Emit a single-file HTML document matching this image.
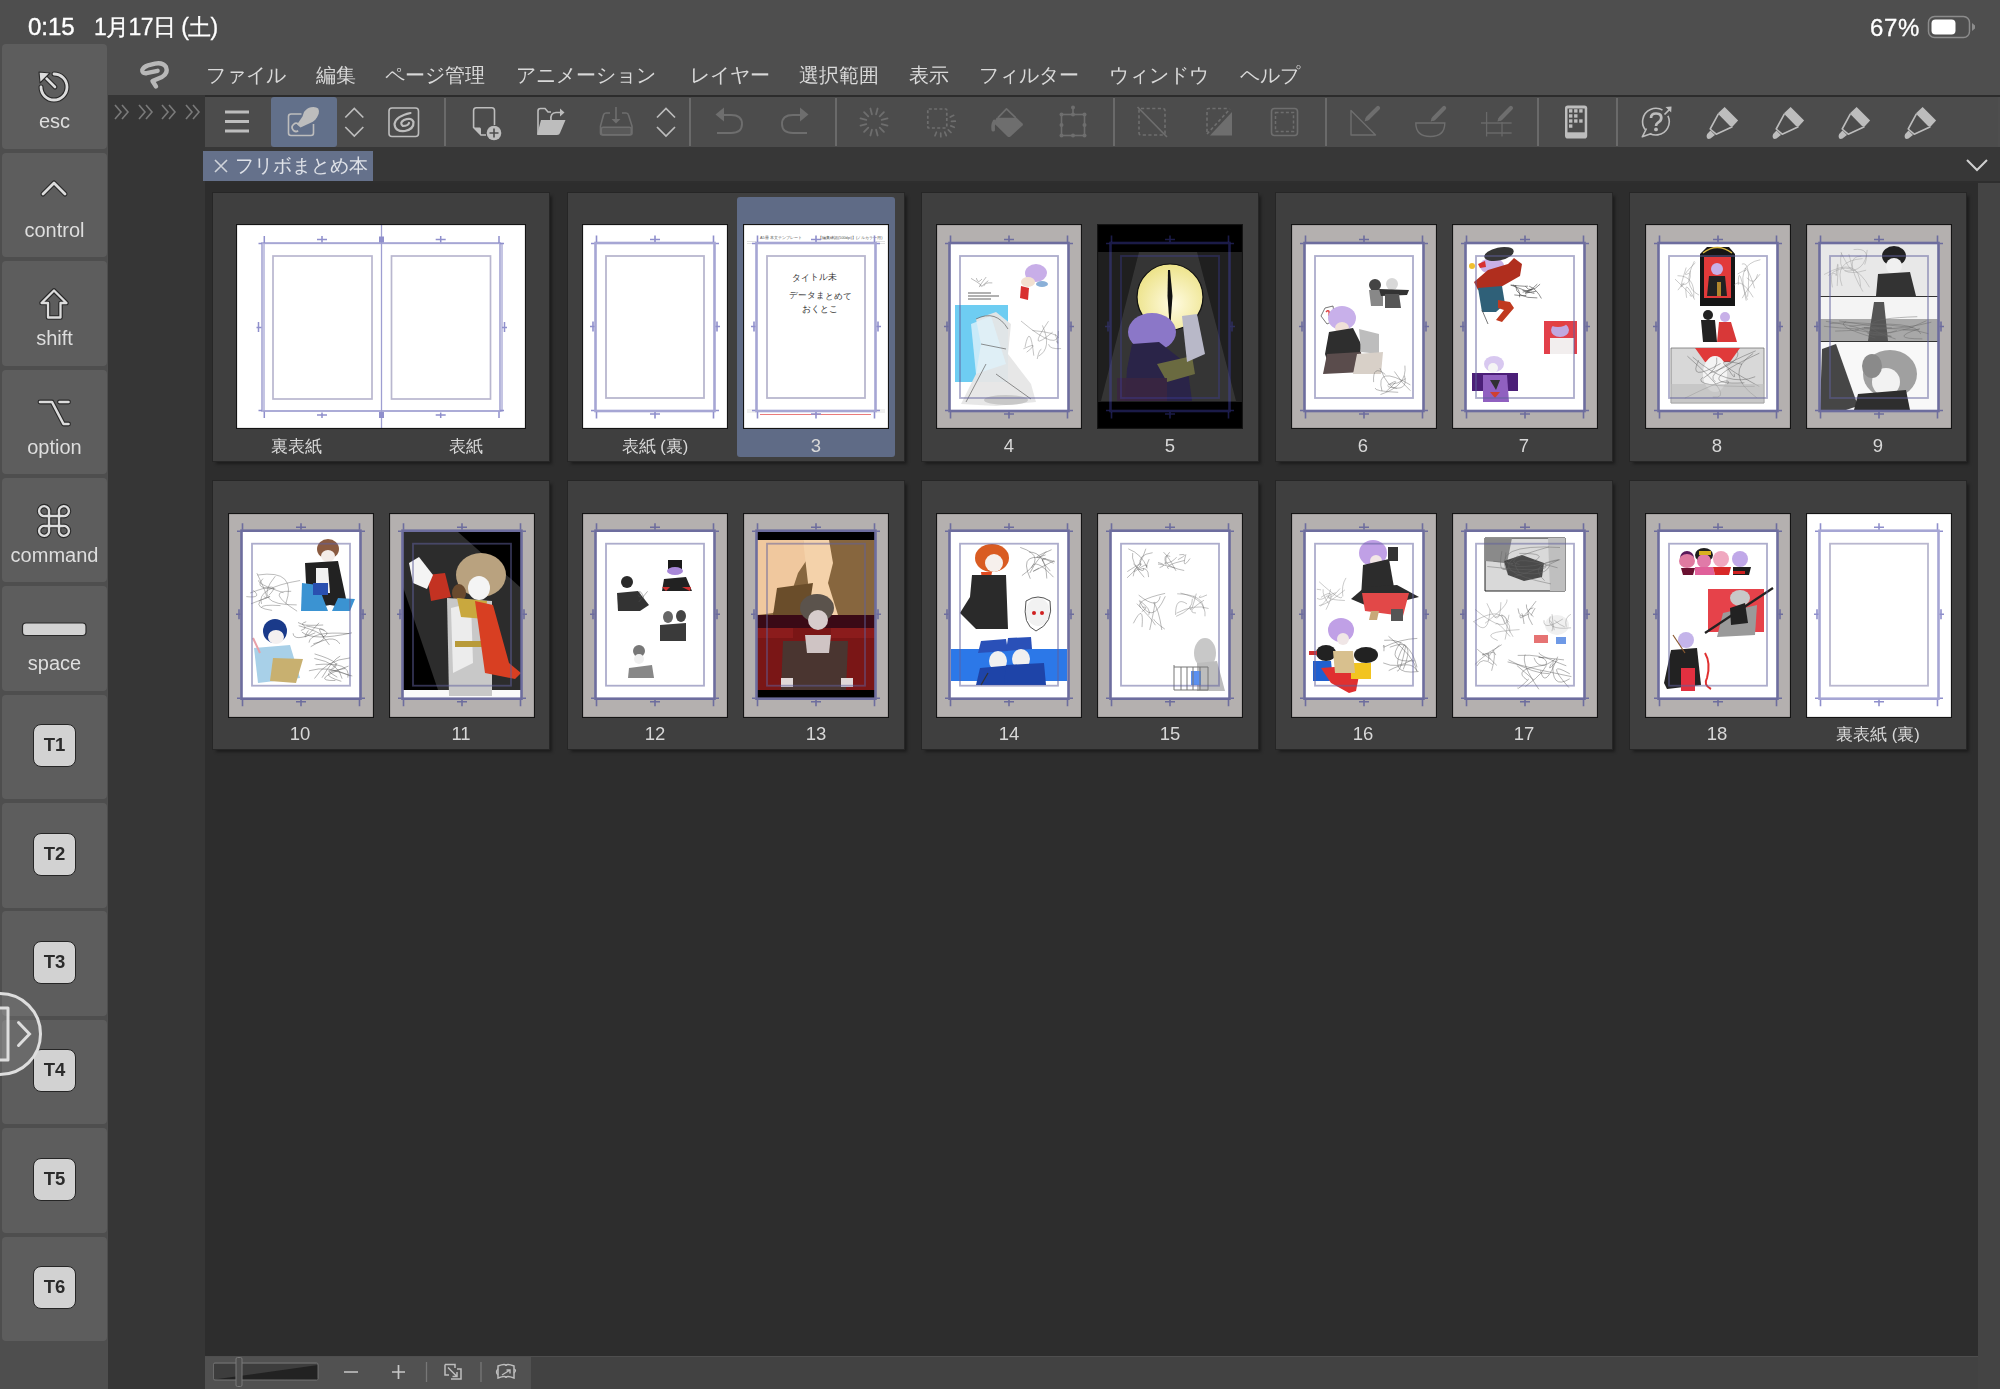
<!DOCTYPE html><html><head><meta charset="utf-8"><style>
*{margin:0;padding:0;box-sizing:border-box}
html,body{width:2000px;height:1389px;overflow:hidden;background:#4e4e4e;font-family:"Liberation Sans",sans-serif}
.a{position:absolute}
.t{will-change:transform}
.key{position:absolute;left:2px;width:105px;height:104.6px;background:#5d5d5d;border-radius:4px}
.kl{position:absolute;left:0;width:105px;text-align:center;color:#dedede;font-size:20px;line-height:20px}
.tb{position:absolute;left:31px;width:43px;height:43px;background:#d2d2d2;border:1.5px solid #262626;border-radius:8px;color:#2b2b2b;font-weight:bold;font-size:18.5px;line-height:40px;text-align:center}
.menu{position:absolute;top:64px;color:#d9d9d9;font-size:20px;line-height:22px;white-space:nowrap}
.sep{position:absolute;top:98px;width:2px;height:48px;background:#6a6a6a}
.card{position:absolute;width:336px;height:268px;background:#3f3f3f;box-shadow:0 0 0 1px #262626,3px 3px 3px rgba(0,0,0,0.4)}
.lbl{position:absolute;color:#d8d8d8;font-size:18.5px;line-height:20px;text-align:center;white-space:nowrap}
.pg{position:absolute;width:146px;height:205px}

</style></head><body>
<div class="a" style="left:108px;top:95px;width:97px;height:1294px;background:#363636"></div>
<div class="a" style="left:205px;top:183px;width:1773px;height:1173px;background:#2d2d2d"></div>
<div class="a" style="left:1978px;top:183px;width:22px;height:1206px;background:#444444"></div>
<div class="a" style="left:205px;top:1357px;width:1773px;height:32px;background:#424242"></div>
<div class="a" style="left:205px;top:1357px;width:326px;height:32px;background:#515151"></div>
<div class="a" style="left:205px;top:147px;width:1795px;height:36px;background:#373737"></div>
<div class="a" style="left:205px;top:181px;width:1795px;height:2px;background:#2e2e2e"></div>
<div class="a" style="left:205px;top:95px;width:1795px;height:2px;background:#2c2c2c"></div>
<div class="a" style="left:205px;top:97px;width:1793px;height:50px;background:#4c4c4c"></div>
<div class="a" style="left:271px;top:97px;width:66px;height:50px;background:#62708a;border-radius:3px"></div>
<div class="sep" style="left:444px"></div>
<div class="sep" style="left:689px"></div>
<div class="sep" style="left:835px"></div>
<div class="sep" style="left:1113px"></div>
<div class="sep" style="left:1325px"></div>
<div class="sep" style="left:1537px"></div>
<div class="sep" style="left:1616px"></div>
<div class="a" style="left:203px;top:151px;width:170px;height:30px;background:#65718b"></div>
<div class="a t" style="left:235px;top:154px;color:#dfe2e8;font-size:19px;line-height:24px;white-space:nowrap">フリボまとめ本</div>
<svg class="a" style="left:213px;top:158px" width="16" height="16"><path d="M2 2L14 14M14 2L2 14" stroke="#cfd3da" stroke-width="1.6"/></svg>
<svg class="a" style="left:1964px;top:156px" width="26" height="18"><path d="M3 4L13 14L23 4" stroke="#d0d0d0" stroke-width="2" fill="none"/></svg>
<div class="a t" style="left:28px;top:13px;color:#fff;font-size:24px;line-height:28px;white-space:nowrap;-webkit-text-stroke:0.4px #fff">0:15</div>
<div class="a t" style="left:94px;top:13px;color:#fff;font-size:23px;line-height:28px;white-space:nowrap;letter-spacing:-0.6px;-webkit-text-stroke:0.3px #fff">1月17日 (土)</div>
<div class="a t" style="left:1870px;top:14px;color:#fff;font-size:24px;line-height:28px;white-space:nowrap;letter-spacing:0.7px;-webkit-text-stroke:0.3px #fff">67%</div>
<svg class="a" style="left:1926px;top:14px" width="52" height="26"><rect x="2.5" y="2.5" width="41" height="21" rx="6" fill="none" stroke="#8c8c8c" stroke-width="1.5"/><rect x="5.5" y="5.5" width="24" height="15" rx="4" fill="#fff"/><path d="M46 9L49 11.5V14.5L46 17Z" fill="#8c8c8c"/></svg>
<div class="menu t" style="left:206px">ファイル</div>
<div class="menu t" style="left:316px">編集</div>
<div class="menu t" style="left:385px">ページ管理</div>
<div class="menu t" style="left:516px">アニメーション</div>
<div class="menu t" style="left:690px">レイヤー</div>
<div class="menu t" style="left:799px">選択範囲</div>
<div class="menu t" style="left:909px">表示</div>
<div class="menu t" style="left:979px">フィルター</div>
<div class="menu t" style="left:1109px">ウィンドウ</div>
<div class="menu t" style="left:1240px">ヘルプ</div>
<svg class="a" style="left:138px;top:58px" width="34" height="34" viewBox="0 0 34 34"><path d="M19.6 12.8 L8.5 15.2 Q3.8 15.8 4.3 11.8 Q5.5 8.8 10 7.3 L17 5.6 Q25 4.2 28 9 Q30.5 15 24 19 L14.5 23 L18 28.5" stroke="#b8b8b8" stroke-width="4.4" fill="none" stroke-linecap="round" stroke-linejoin="round"/></svg>
<svg class="a" style="left:113.0px;top:103px" width="20" height="18"><path d="M2 2L8 9L2 16M9 2L15 9L9 16" stroke="#7a7a7a" stroke-width="1.6" fill="none"/></svg>
<svg class="a" style="left:136.5px;top:103px" width="20" height="18"><path d="M2 2L8 9L2 16M9 2L15 9L9 16" stroke="#7a7a7a" stroke-width="1.6" fill="none"/></svg>
<svg class="a" style="left:160.0px;top:103px" width="20" height="18"><path d="M2 2L8 9L2 16M9 2L15 9L9 16" stroke="#7a7a7a" stroke-width="1.6" fill="none"/></svg>
<svg class="a" style="left:183.5px;top:103px" width="20" height="18"><path d="M2 2L8 9L2 16M9 2L15 9L9 16" stroke="#7a7a7a" stroke-width="1.6" fill="none"/></svg>
<div class="key" style="top:44.4px">
<div class="kl t" style="top:67px">esc</div>
</div>
<div class="key" style="top:152.8px">
<div class="kl t" style="top:67px">control</div>
</div>
<div class="key" style="top:261.2px">
<div class="kl t" style="top:67px">shift</div>
</div>
<div class="key" style="top:369.5px">
<div class="kl t" style="top:67px">option</div>
</div>
<div class="key" style="top:477.9px">
<div class="kl t" style="top:67px">command</div>
</div>
<div class="key" style="top:586.3px">
<div class="kl t" style="top:67px">space</div>
</div>
<div class="key" style="top:694.7px">
<div class="tb t" style="top:29.5px">T1</div>
</div>
<div class="key" style="top:803.1px">
<div class="tb t" style="top:29.5px">T2</div>
</div>
<div class="key" style="top:911.4px">
<div class="tb t" style="top:29.5px">T3</div>
</div>
<div class="key" style="top:1019.8px">
<div class="tb t" style="top:29.5px">T4</div>
</div>
<div class="key" style="top:1128.2px">
<div class="tb t" style="top:29.5px">T5</div>
</div>
<div class="key" style="top:1236.6px">
<div class="tb t" style="top:29.5px">T6</div>
</div>
<svg class="a" style="left:0;top:0" width="108" height="700">
<path d="M54 74 A13 13 0 1 1 41 87" stroke="#2a2a2a" stroke-width="5.0" fill="none" stroke-linecap="round" stroke-linejoin="round" /><path d="M54 74 A13 13 0 1 1 41 87" stroke="#dcdcdc" stroke-width="2.8" fill="none" stroke-linecap="round" stroke-linejoin="round" />
<path d="M45 77 L55 87" stroke="#2a2a2a" stroke-width="4.800000000000001" fill="none" stroke-linecap="round" stroke-linejoin="round" /><path d="M45 77 L55 87" stroke="#dcdcdc" stroke-width="2.6" fill="none" stroke-linecap="round" stroke-linejoin="round" />
<path d="M39 72 L50 73 L40 83 Z" fill="#dcdcdc" stroke="#2a2a2a" stroke-width="1.1" stroke-linejoin="round"/>
<path d="M43 194 L54 183 L65 194" stroke="#2a2a2a" stroke-width="5.0" fill="none" stroke-linecap="round" stroke-linejoin="round" /><path d="M43 194 L54 183 L65 194" stroke="#dcdcdc" stroke-width="2.8" fill="none" stroke-linecap="round" stroke-linejoin="round" />
<path d="M54 290.5 L66.5 303 L60.5 303 L60.5 317.5 L48 317.5 L48 303 L41.5 303 Z" fill="none" stroke="#2a2a2a" stroke-width="4.6" stroke-linejoin="round"/>
<path d="M54 290.5 L66.5 303 L60.5 303 L60.5 317.5 L48 317.5 L48 303 L41.5 303 Z" fill="none" stroke="#dcdcdc" stroke-width="2.3" stroke-linejoin="round"/>
<path d="M40 402 L52 402 L63.5 424 L68.5 424 M59.5 402 L68.5 402" stroke="#2a2a2a" stroke-width="4.800000000000001" fill="none" stroke-linecap="round" stroke-linejoin="round" /><path d="M40 402 L52 402 L63.5 424 L68.5 424 M59.5 402 L68.5 402" stroke="#dcdcdc" stroke-width="2.6" fill="none" stroke-linecap="round" stroke-linejoin="round" />
<g transform="translate(54 521)">
<path d="M-5 -5 L5 -5 L5 5 L-5 5 Z M-5 -5 L-5 -9 A5 5 0 1 0 -9 -5 L-5 -5 M5 -5 L5 -9 A5 5 0 1 1 9 -5 L5 -5 M5 5 L9 5 A5 5 0 1 1 5 9 L5 5 M-5 5 L-5 9 A5 5 0 1 1 -9 5 L-5 5" stroke="#2a2a2a" stroke-width="4.6" fill="none" stroke-linecap="round" stroke-linejoin="round" /><path d="M-5 -5 L5 -5 L5 5 L-5 5 Z M-5 -5 L-5 -9 A5 5 0 1 0 -9 -5 L-5 -5 M5 -5 L5 -9 A5 5 0 1 1 9 -5 L5 -5 M5 5 L9 5 A5 5 0 1 1 5 9 L5 5 M-5 5 L-5 9 A5 5 0 1 1 -9 5 L-5 5" stroke="#dcdcdc" stroke-width="2.4" fill="none" stroke-linecap="round" stroke-linejoin="round" />
</g>
<rect x="22.5" y="623" width="63.5" height="12.5" rx="3.5" fill="#d3d3d3" stroke="#2a2a2a" stroke-width="1.2"/>
</svg>
<svg class="a" style="left:0;top:988px" width="48" height="92">
<circle cx="0" cy="46" r="40.5" fill="rgba(160,160,160,0.2)" stroke="#dedede" stroke-width="3"/>
<path d="M-10 20 H8 V72 H-10" fill="rgba(200,200,200,0.22)" stroke="#dedede" stroke-width="3" stroke-linejoin="round"/>
<path d="M18.5 34.5 L29.5 46 L18.5 57.5" fill="none" stroke="#dedede" stroke-width="3" stroke-linecap="round"/>
</svg>
<svg class="a" style="left:0;top:95px" width="2000" height="52" viewBox="0 95 2000 52">
<rect x="225" y="110.5" width="24" height="3" fill="#bdbdbd"/>
<rect x="225" y="120.0" width="24" height="3" fill="#bdbdbd"/>
<rect x="225" y="129.5" width="24" height="3" fill="#bdbdbd"/>
<path d="M301.5 114 H291 Q288.5 114 288.5 116.5 V133 Q288.5 135.5 291 135.5 H311 Q313.5 135.5 313.5 133 V124" stroke="#bdbdbd" stroke-width="1.6" fill="none"/>
<path d="M304 112 Q307 108 311 107.3 Q316 106.5 318.2 108.6 Q319.5 111 318.7 113.7 Q317.5 117 315.3 119.7 Q313 122 310.2 123 L300.5 127.5 L297 124.5 L302.5 116.5 Z" fill="#bdbdbd"/>
<path d="M299 124.5 A4 4 0 1 0 298.2 130.8" stroke="#bdbdbd" stroke-width="1.7" fill="none"/>
<path d="M345.3 117.5 L354.3 108.5 L363.3 117.5 M345.3 127 L354.3 136 L363.3 127" stroke="#bdbdbd" stroke-width="1.7" fill="none"/>
<path d="M657 117.5 L666 108.5 L675 117.5 M657 127 L666 136 L675 127" stroke="#bdbdbd" stroke-width="1.7" fill="none"/>
<rect x="389" y="108" width="29.5" height="28.5" rx="3" stroke="#bdbdbd" stroke-width="1.6" fill="none"/>
<path d="M410.5 113 Q396 116 394.5 124 Q395 132 405 131 Q414 129 413.5 122 Q411.5 117 404 120 Q399 123 403 126 Q408 126 409 123" stroke="#bdbdbd" stroke-width="2.2" fill="none" stroke-linecap="round"/>
<path d="M494.5 125 V110.5 Q494.5 107.8 491.8 107.8 H476.3 Q473.6 107.8 473.6 110.5 V127.5 L481 135 H486" stroke="#bdbdbd" stroke-width="1.6" fill="none"/>
<path d="M473.5 127.5 L480 127.5 Q481 128 481 129 L481 135 Z" fill="#bdbdbd"/>
<circle cx="494" cy="133" r="7.3" fill="#bdbdbd"/><path d="M494 128.5 V137.5 M489.5 133 H498.5" stroke="#4c4c4c" stroke-width="1.6"/>
<path d="M538 134 V111 Q538 108.5 540.5 108.5 H545 L548 112 H551" stroke="#bdbdbd" stroke-width="1.6" fill="none"/>
<path d="M541 120 H565.5 L560 133 Q559.5 135 557 135 H537 Z" fill="#bdbdbd"/>
<path d="M551 120 Q550 113 556 112.5 H561" stroke="#bdbdbd" stroke-width="1.7" fill="none"/><path d="M560 108.5 L564.5 112.5 L560 116.5 Z" fill="#bdbdbd"/>
<path d="M610 113 H606 Q604 113 603.5 115 L600.5 126 V133 Q600.5 135 602.5 135 H630 Q632 135 632 133 V126 L628.5 115 Q628 113 626 113 H622" stroke="#6e6e6e" stroke-width="1.6" fill="none"/>
<rect x="601.3" y="127.3" width="30" height="7.5" rx="2" fill="#595959" stroke="#6e6e6e" stroke-width="1.5"/>
<path d="M616 107 V121" stroke="#6e6e6e" stroke-width="1.6"/><path d="M611.5 119 L616 123.5 L620.5 119 Z" fill="#6e6e6e"/>
<path d="M722 115 H731 Q742 115 742 124 Q742 133 731 133 H717" stroke="#6e6e6e" stroke-width="1.9" fill="none"/><path d="M715.5 114.5 L724 107.5 V121.5 Z" fill="#6e6e6e"/>
<path d="M800 115 H793 Q782 115 782 124 Q782 133 793 133 H807" stroke="#6e6e6e" stroke-width="1.9" fill="none"/><path d="M808.5 114.5 L800 107.5 V121.5 Z" fill="#6e6e6e"/>
<path d="M881.7 124.1L887.5 125.6M879.7 127.7L883.9 131.9M876.1 129.7L877.6 135.5M871.9 129.7L870.4 135.5M868.3 127.7L864.1 131.9M866.3 124.1L860.5 125.6M866.3 119.9L860.5 118.4M868.3 116.3L864.1 112.1M871.9 114.3L870.4 108.5M876.1 114.3L877.6 108.5M879.7 116.3L883.9 112.1M881.7 119.9L887.5 118.4" stroke="#6e6e6e" stroke-width="1.8" stroke-linecap="round"/>
<rect x="927.8" y="109" width="19" height="19" rx="1" stroke="#6e6e6e" stroke-width="1.7" fill="none" stroke-dasharray="3 2.3"/>
<path d="M950.3 117.0L953.7 115.3M951.5 121.4L955.3 121.2M950.8 125.9L954.3 127.3M948.3 129.8L951.0 132.5M944.8 132.1L946.3 135.6M940.7 133.0L940.8 136.8M936.4 132.2L935.0 135.7" stroke="#6e6e6e" stroke-width="1.7" stroke-linecap="round"/>
<path d="M997.8 117.8 L1006.5 108.8 L1015.8 117.8" stroke="#6e6e6e" stroke-width="1.7" fill="none" stroke-linejoin="round"/>
<path d="M996.5 117.8 H1016.5 L1022.5 123.5 Q1023.5 124.5 1022.5 125.5 L1010.5 136.5 Q1009 137.5 1007.5 136.5 L993.8 123 Z" fill="#6e6e6e"/>
<path d="M994.5 121.5 Q992.5 125 993.2 129.8" stroke="#6e6e6e" stroke-width="3.6" fill="none" stroke-linecap="round"/>
<rect x="1061.5" y="114.5" width="23" height="21" stroke="#6e6e6e" stroke-width="1.6" fill="none"/><path d="M1073 114.5 V108" stroke="#6e6e6e" stroke-width="1.6"/>
<circle cx="1061.5" cy="114.5" r="2" fill="#6e6e6e"/>
<circle cx="1073" cy="114.5" r="2" fill="#6e6e6e"/>
<circle cx="1084.5" cy="114.5" r="2" fill="#6e6e6e"/>
<circle cx="1061.5" cy="125" r="2" fill="#6e6e6e"/>
<circle cx="1084.5" cy="125" r="2" fill="#6e6e6e"/>
<circle cx="1061.5" cy="135.5" r="2" fill="#6e6e6e"/>
<circle cx="1073" cy="135.5" r="2" fill="#6e6e6e"/>
<circle cx="1084.5" cy="135.5" r="2" fill="#6e6e6e"/>
<circle cx="1073" cy="107.5" r="2" fill="#6e6e6e"/>
<rect x="1139" y="108.5" width="26" height="26.5" rx="2" stroke="#6e6e6e" stroke-width="1.6" fill="none" stroke-dasharray="3.2 2.4"/><path d="M1137.5 107 L1167 137" stroke="#6e6e6e" stroke-width="1.6"/>
<path d="M1207 132 V110 Q1207 108.5 1208.5 108.5 H1229" stroke="#6e6e6e" stroke-width="1.6" fill="none" stroke-dasharray="3.2 2.4"/><path d="M1207 134 L1230 109" stroke="#6e6e6e" stroke-width="1.6" stroke-dasharray="3.2 2.4"/><path d="M1210 135.5 L1232 112 V135.5 Z" fill="#6e6e6e"/>
<rect x="1271.5" y="108.5" width="26" height="27" rx="3" stroke="#6e6e6e" stroke-width="1.6" fill="none"/><rect x="1275.5" y="112.5" width="18" height="19" stroke="#6e6e6e" stroke-width="1.5" fill="none" stroke-dasharray="3 2.2"/>
<path d="M1351 110.5 V135 H1375.5 Z" stroke="#6e6e6e" stroke-width="1.4" fill="none" stroke-linejoin="round"/><path d="M1367.7 118.3 L1378.0 108.0" stroke="#6e6e6e" stroke-width="4.2" stroke-linecap="round"/><path d="M1364.5 121.5 L1365.7 117.7 L1368.3 120.3 Z" fill="#6e6e6e"/>
<path d="M1415.8 123 H1444.8 Q1444.8 136.5 1430.3 136.5 Q1415.8 136.5 1415.8 123 Z" stroke="#6e6e6e" stroke-width="1.4" fill="none"/><path d="M1433.8 118.39999999999999 L1444.1 108.1" stroke="#6e6e6e" stroke-width="4.2" stroke-linecap="round"/><path d="M1430.6 121.6 L1431.8 117.8 L1434.3999999999999 120.39999999999999 Z" fill="#6e6e6e"/>
<path d="M1486.6 112 V136.5 M1502 122 V136.5 M1481 123 H1511.6 M1486.6 133 H1511.6" stroke="#6e6e6e" stroke-width="1.3" fill="none" opacity="0.85"/><path d="M1500.6000000000001 118.39999999999999 L1510.9 108.1" stroke="#6e6e6e" stroke-width="4.2" stroke-linecap="round"/><path d="M1497.4 121.6 L1498.6000000000001 117.8 L1501.2 120.39999999999999 Z" fill="#6e6e6e"/>
<rect x="1565" y="105.5" width="22.2" height="33" rx="2.8" fill="#bdbdbd"/><rect x="1567.5" y="108.5" width="17.2" height="23.8" fill="#4c4c4c"/>
<rect x="1569.0" y="109.2" width="3.4" height="3.4" fill="#bdbdbd"/>
<rect x="1574.1" y="109.2" width="3.4" height="3.4" fill="#bdbdbd"/>
<rect x="1579.2" y="109.2" width="3.4" height="3.4" fill="#bdbdbd"/>
<rect x="1569.0" y="114.25" width="3.4" height="3.4" fill="#bdbdbd"/>
<rect x="1574.1" y="114.25" width="3.4" height="3.4" fill="#bdbdbd"/>
<rect x="1569.0" y="119.3" width="3.4" height="3.4" fill="#bdbdbd"/>
<rect x="1574.1" y="119.3" width="3.4" height="3.4" fill="#bdbdbd"/>
<rect x="1579.2" y="119.3" width="3.4" height="3.4" fill="#bdbdbd"/>
<rect x="1569.0" y="124.35" width="3.4" height="3.4" fill="#bdbdbd"/>
<path d="M1667.9 115.9 A13.3 13.3 0 1 1 1662.5 110.1" stroke="#bdbdbd" stroke-width="1.6" fill="none"/>
<path d="M1646.5 128 L1642.3 136.8 L1651.5 133.2 Z" fill="#4c4c4c"/><path d="M1646.5 128.5 L1642.3 136.8 L1651.5 133.5" stroke="#bdbdbd" stroke-width="1.6" fill="none" stroke-linejoin="round"/>
<path d="M1651 118 Q1651 113.5 1656 113.5 Q1661.3 113.5 1661.3 117.8 Q1661.3 120.8 1658 122.6 Q1656 123.8 1656 126" stroke="#bdbdbd" stroke-width="2.7" fill="none"/><circle cx="1656" cy="129.4" r="1.9" fill="#bdbdbd"/>
<path d="M1664.5 114.5 L1669.5 109.5" stroke="#bdbdbd" stroke-width="1.7"/><path d="M1665.5 107 L1671.5 106.6 L1671.2 112.6 Z" fill="#bdbdbd"/>
<g transform="translate(1722 122)"><path d="M-4 -8.8 L2.6 -15.1 L16.1 -1.6 L10.4 4.7 L8 4 L-2.5 -6.8 Z" fill="#bdbdbd"/><path d="M-3.6 -8.2 L-11.8 7 L-5.8 12.2 L10.4 4.7" stroke="#bdbdbd" stroke-width="1.6" fill="none" stroke-linejoin="round"/><path d="M-11.5 8.5 L-7 13 L-11.5 16.5 Q-14 17.5 -15 16 Q-16 14 -14.8 12 Z" fill="#bdbdbd"/></g>
<g transform="translate(1788 122)"><path d="M-4 -8.8 L2.6 -15.1 L16.1 -1.6 L10.4 4.7 L8 4 L-2.5 -6.8 Z" fill="#bdbdbd"/><path d="M-3.6 -8.2 L-11.8 7 L-5.8 12.2 L10.4 4.7" stroke="#bdbdbd" stroke-width="1.6" fill="none" stroke-linejoin="round"/><path d="M-11.5 8.5 L-7 13 L-11.5 16.5 Q-14 17.5 -15 16 Q-16 14 -14.8 12 Z" fill="#bdbdbd"/></g>
<g transform="translate(1854 122)"><path d="M-4 -8.8 L2.6 -15.1 L16.1 -1.6 L10.4 4.7 L8 4 L-2.5 -6.8 Z" fill="#bdbdbd"/><path d="M-3.6 -8.2 L-11.8 7 L-5.8 12.2 L10.4 4.7" stroke="#bdbdbd" stroke-width="1.6" fill="none" stroke-linejoin="round"/><path d="M-11.5 8.5 L-7 13 L-11.5 16.5 Q-14 17.5 -15 16 Q-16 14 -14.8 12 Z" fill="#bdbdbd"/></g>
<g transform="translate(1920 122)"><path d="M-4 -8.8 L2.6 -15.1 L16.1 -1.6 L10.4 4.7 L8 4 L-2.5 -6.8 Z" fill="#bdbdbd"/><path d="M-3.6 -8.2 L-11.8 7 L-5.8 12.2 L10.4 4.7" stroke="#bdbdbd" stroke-width="1.6" fill="none" stroke-linejoin="round"/><path d="M-11.5 8.5 L-7 13 L-11.5 16.5 Q-14 17.5 -15 16 Q-16 14 -14.8 12 Z" fill="#bdbdbd"/></g>
</svg>
<svg class="a" style="left:205px;top:1356px" width="330" height="33" viewBox="205 1356 330 33">
<rect x="213.5" y="1363" width="104.5" height="17" rx="1.5" fill="#3d3d3d" stroke="#6a6a6a" stroke-width="1"/>
<path d="M214 1379.5 L318 1365 V1380 Z" fill="#222"/>
<rect x="213.5" y="1363" width="104.5" height="17" rx="1.5" fill="none" stroke="#6a6a6a" stroke-width="1"/>
<rect x="236" y="1357.5" width="6" height="29" rx="1.5" fill="#4f4f4f" stroke="#7a7a7a" stroke-width="1"/>
<path d="M344 1372 H358 M392 1372 H405 M398.5 1365 V1379" stroke="#c8c8c8" stroke-width="1.7"/>
<path d="M426.5 1362 V1382 M481 1362 V1382" stroke="#777" stroke-width="1.3"/>
<path d="M445 1364.5 H455 V1368 M451 1379 H461 V1369 H457" stroke="#bdbdbd" stroke-width="1.5" fill="none"/><path d="M445 1364.5 V1375 H449" stroke="#bdbdbd" stroke-width="1.5" fill="none"/><path d="M448 1367.5 L457 1376.5 M457 1372 V1376.5 H452.5" stroke="#bdbdbd" stroke-width="1.5" fill="none"/>
<path d="M498 1366 Q506 1363 506 1366 Q506 1363 514 1366 V1378 Q506 1375 506 1378 Q506 1375 498 1378 Z" stroke="#bdbdbd" stroke-width="1.5" fill="none"/><path d="M502 1375 L510 1370 M506.5 1370 H510 V1373.5" stroke="#bdbdbd" stroke-width="1.4" fill="none"/><path d="M498 1369 Q495 1372 498 1375 M514 1369 Q517 1370 514 1373" stroke="#bdbdbd" stroke-width="1.3" fill="none"/>
</svg>
<div class="card" style="left:213px;top:193px"></div>
<div class="card" style="left:568px;top:193px"></div>
<div class="card" style="left:922px;top:193px"></div>
<div class="card" style="left:1276px;top:193px"></div>
<div class="card" style="left:1630px;top:193px"></div>
<div class="card" style="left:213px;top:481px"></div>
<div class="card" style="left:568px;top:481px"></div>
<div class="card" style="left:922px;top:481px"></div>
<div class="card" style="left:1276px;top:481px"></div>
<div class="card" style="left:1630px;top:481px"></div>
<div class="a" style="left:737px;top:197px;width:158px;height:260px;background:#5f6b86;border-radius:3px"></div>
<svg class="a" style="left:236px;top:224px" width="290" height="205" viewBox="0 0 290 205"><rect width="290" height="205" fill="#fff"/><rect x="26" y="19" width="238" height="168" fill="none" stroke="#a6a6d4" stroke-width="1.6"/><rect x="28" y="19.5" width="238" height="167.5" fill="none" stroke="#a6a6d4" stroke-width="1.3"/><rect x="37" y="32" width="99" height="143" fill="none" stroke="#b9b7cf" stroke-width="1.7"/><rect x="155.5" y="32" width="99" height="143" fill="none" stroke="#b9b7cf" stroke-width="1.7"/><path d="M145.5 0V205" stroke="#9e9ed2" stroke-width="1.3"/><rect x="143" y="12.5" width="5" height="6" fill="#8f8fcc"/><rect x="143" y="188" width="5" height="6" fill="#8f8fcc"/><path d="M28.3 12V19M28.3 187.5V194M263 12V19M263 187.5V194M22.5 19.5H26M264 19.5H268M22.5 186.5H26M264 186.5H268M81 15.5H91M86 12V18.5M81 191H91M86 188.5V194M199.7 15.5H209.7M204.7 12V18.5M199.7 191H209.7M204.7 188.5V194M20.5 103.5H25.5M22.5 98V108M266 103.5H271M268.5 98V108" stroke="#8f8fcc" stroke-width="1.5" fill="none"/><rect x="0.5" y="0.5" width="289" height="204" fill="none" stroke="#141414" stroke-width="1.2"/></svg>
<svg class="pg" style="left:228px;top:513px" width="146" height="205" viewBox="0 0 146 205"><rect x="0" y="0" width="146" height="205" fill="#b4b0af"/><rect x="13" y="17.7" width="120" height="168" fill="#fff"/><ellipse cx="100" cy="36" rx="11" ry="10" fill="#8a5a40" opacity="1"/><ellipse cx="100" cy="43" rx="7" ry="6" fill="#f4ece8" opacity="1"/><polygon points="77,50 110,48 120,95 102,92 85,95 78,70" fill="#222" opacity="1"/><polygon points="74,70 90,72 100,98 73,98" fill="#3b93d2" opacity="1"/><polygon points="110,85 127,86 122,98 104,98" fill="#3b93d2" opacity="1"/><polygon points="88,55 100,55 102,80 88,80" fill="#f2f2f2" opacity="1"/><rect x="85" y="70" width="15" height="12" fill="#2a50b0" opacity="1"/><path d="M28.9 60.2Q43.8 90.8 35.7 83.4M72.1 67.5Q27.5 74.9 33.6 90.9M18.3 83.6Q34.9 85.5 25.3 77.3M47.3 63.2Q22.9 92.4 68.7 91.9M29.7 62.0Q69.7 56.0 57.8 90.8M31.8 88.4Q27.1 95.2 44.1 97.4M22.1 80.0Q56.5 66.9 40.7 82.5M33.3 94.6Q33.7 91.3 52.5 92.6M69.1 98.2Q36.4 77.3 63.2 78.3M23.0 90.8Q57.3 77.6 30.6 88.0M55.5 79.7Q28.1 70.7 30.9 67.1M35.0 65.6Q25.0 76.2 47.3 75.7" stroke="#666" stroke-width="0.8" fill="none" opacity="0.55"/><ellipse cx="47" cy="118" rx="12" ry="12" fill="#1a3a8a" opacity="1"/><ellipse cx="48" cy="124" rx="8" ry="7" fill="#f4f0f0" opacity="1"/><polygon points="26,135 62,132 72,165 30,170" fill="#a8d0e8" opacity="1"/><polygon points="45,145 75,146 68,170 42,168" fill="#c8b070" opacity="1"/><path d="M25 125 L32 140" stroke="#e8a0a8" stroke-width="2" fill="none" opacity="1"/><path d="M85.3 130.8Q111.9 124.3 70.7 112.7M94.7 124.0Q108.5 118.0 78.3 113.0M81.0 129.6Q82.2 117.8 121.2 120.6M70.0 109.5Q83.1 114.2 72.9 117.5M82.7 133.7Q105.6 119.8 111.8 130.9M65.1 120.3Q65.6 129.2 87.3 119.8M73.9 119.1Q85.4 128.5 124.0 119.8M96.6 117.4Q84.5 110.4 101.4 131.9M95.2 112.0Q65.2 113.4 78.2 108.7M91.1 109.8Q69.8 133.6 80.4 117.4" stroke="#555" stroke-width="0.8" fill="none" opacity="0.55"/><path d="M122.3 163.0Q100.1 152.0 80.9 157.8M107.4 167.5Q80.5 168.1 120.5 153.1M113.3 168.3Q85.5 160.1 117.3 155.5M94.0 164.7Q104.6 146.7 112.2 143.1M87.5 151.7Q123.6 148.4 119.8 164.6M102.8 156.5Q119.1 150.7 86.6 140.9M122.1 144.9Q97.8 147.0 86.5 165.5M124.3 163.0Q86.5 150.8 109.3 164.2M114.1 165.7Q111.3 150.0 86.3 145.4M104.7 154.3Q110.4 149.8 108.5 150.5" stroke="#555" stroke-width="0.8" fill="none" opacity="0.55"/><g transform="translate(0 -1.3)"><rect x="13.5" y="19" width="119" height="168" fill="none" stroke="#6d6d9e" stroke-width="2.6"/><rect x="24" y="32" width="98" height="142" fill="none" stroke="rgba(96,96,158,0.52)" stroke-width="1.8"/><path d="M14.5 11.5V18M14.5 188V194.5M131.5 11.5V18M131.5 188V194.5M9 19.5H12.5M133.5 19.5H137M9 186.5H12.5M133.5 186.5H137M68 15.5H78M73 11.5V18M68 190H78M73 188V194.5M8 102.5H12.5M11 97.5V107.5M133.5 102.5H138M135 97.5V107.5" stroke="#6d6d9e" stroke-width="1.6" fill="none"/></g><rect x="0.5" y="0.5" width="145" height="204" fill="none" stroke="#141414" stroke-width="1.2"/></svg>
<svg class="pg" style="left:389px;top:513px" width="146" height="205" viewBox="0 0 146 205"><rect x="0" y="0" width="146" height="205" fill="#b4b0af"/><rect x="13" y="17.7" width="120" height="168" fill="#fff"/><rect x="14" y="19" width="118" height="158" fill="#000" opacity="1"/><polygon points="14,19 69,19 131,74 131,177 49,177 14,74" fill="#2c2c2c" opacity="1"/><rect x="14" y="177" width="118" height="7" fill="#fafafa" opacity="1"/><ellipse cx="92" cy="62" rx="25" ry="22" fill="#b9a27f" opacity="1"/><ellipse cx="70" cy="80" rx="7" ry="9" fill="#6a4a2e" opacity="1"/><ellipse cx="90" cy="75" rx="11" ry="12" fill="#f4f4f4" opacity="1"/><polygon points="38,62 56,60 62,84 42,88" fill="#c33222" opacity="1"/><polygon points="20,50 30,44 44,62 38,76 24,70" fill="#f4f4f4" opacity="1"/><polygon points="58,85 103,88 103,183 60,183" fill="#c8c8c8" opacity="1"/><polygon points="62,95 82,90 84,150 64,160" fill="#ececec" opacity="1"/><polygon points="68,85 98,88 96,106 72,104" fill="#c9a83e" opacity="1"/><rect x="66" y="128" width="30" height="6" fill="#b89a38" opacity="1"/><polygon points="86,88 104,92 120,150 132,160 126,166 96,160" fill="#d83f22" opacity="1"/><g transform="translate(0 -1.3)"><rect x="13.5" y="19" width="119" height="168" fill="none" stroke="#6d6d9e" stroke-width="2.6"/><rect x="24" y="32" width="98" height="142" fill="none" stroke="rgba(96,96,158,0.52)" stroke-width="1.8"/><path d="M14.5 11.5V18M14.5 188V194.5M131.5 11.5V18M131.5 188V194.5M9 19.5H12.5M133.5 19.5H137M9 186.5H12.5M133.5 186.5H137M68 15.5H78M73 11.5V18M68 190H78M73 188V194.5M8 102.5H12.5M11 97.5V107.5M133.5 102.5H138M135 97.5V107.5" stroke="#6d6d9e" stroke-width="1.6" fill="none"/></g><rect x="0.5" y="0.5" width="145" height="204" fill="none" stroke="#141414" stroke-width="1.2"/></svg>
<svg class="pg" style="left:582px;top:224px" width="146" height="205" viewBox="0 0 146 205"><rect x="0" y="0" width="146" height="205" fill="#fff"/><g transform="translate(0 0)"><rect x="13.5" y="19" width="119" height="168" fill="none" stroke="#a6a6d4" stroke-width="2.6"/><rect x="24" y="32" width="98" height="142" fill="none" stroke="#b9b7cf" stroke-width="1.8"/><path d="M14.5 11.5V18M14.5 188V194.5M131.5 11.5V18M131.5 188V194.5M9 19.5H12.5M133.5 19.5H137M9 186.5H12.5M133.5 186.5H137M68 15.5H78M73 11.5V18M68 190H78M73 188V194.5M8 102.5H12.5M11 97.5V107.5M133.5 102.5H138M135 97.5V107.5" stroke="#8f8fcc" stroke-width="1.6" fill="none"/></g><rect x="0.5" y="0.5" width="145" height="204" fill="none" stroke="#141414" stroke-width="1.2"/></svg>
<svg class="pg" style="left:743px;top:224px" width="146" height="205" viewBox="0 0 146 205"><rect x="0" y="0" width="146" height="205" fill="#fff"/><g font-family="Liberation Sans, sans-serif" fill="#3a3a3a"><text x="49" y="57" font-size="9" transform="rotate(-2 49 57)">タイトル未</text><text x="46" y="74" font-size="8.6" transform="rotate(1 46 74)">データまとめて</text><text x="59" y="88" font-size="8.6">おくとこ</text><text x="17" y="15" font-size="3.8" fill="#555">A5冊  本文テンプレート</text><text x="75" y="15" font-size="3.8" fill="#555">【編集確認(500dpi)】(ノルカラー用)</text></g><path d="M17 190.5 H128" stroke="#e03a3a" stroke-width="0.9" fill="none" opacity="0.75"/><path d="M4 17.5 H13 M4 19.5 H13 M133 17.5 H142 M133 19.5 H142 M4 186 H13 M4 188 H13 M133 186 H142 M133 188 H142" stroke="#aaa" stroke-width="0.5" fill="none" opacity="0.7"/><g transform="translate(0 0)"><rect x="13.5" y="19" width="119" height="168" fill="none" stroke="#a6a6d4" stroke-width="2.6"/><rect x="24" y="32" width="98" height="142" fill="none" stroke="#b9b7cf" stroke-width="1.8"/><path d="M14.5 11.5V18M14.5 188V194.5M131.5 11.5V18M131.5 188V194.5M9 19.5H12.5M133.5 19.5H137M9 186.5H12.5M133.5 186.5H137M68 15.5H78M73 11.5V18M68 190H78M73 188V194.5M8 102.5H12.5M11 97.5V107.5M133.5 102.5H138M135 97.5V107.5" stroke="#8f8fcc" stroke-width="1.6" fill="none"/></g><rect x="0.5" y="0.5" width="145" height="204" fill="none" stroke="#141414" stroke-width="1.2"/></svg>
<svg class="pg" style="left:582px;top:513px" width="146" height="205" viewBox="0 0 146 205"><rect x="0" y="0" width="146" height="205" fill="#b4b0af"/><rect x="13" y="17.7" width="120" height="168" fill="#fff"/><ellipse cx="45" cy="69" rx="6" ry="6" fill="#2a2a2a" opacity="1"/><polygon points="35,80 56,78 67,92 58,98 36,98" fill="#333" opacity="1"/><path d="M56.8 79.0Q59.2 77.0 61.8 85.3M57.2 79.1Q60.8 87.1 55.8 82.2M65.6 78.3Q65.8 78.1 56.7 89.0" stroke="#555" stroke-width="0.8" fill="none" opacity="0.55"/><rect x="86" y="47" width="14" height="11" fill="#1a1a1a" opacity="1"/><ellipse cx="93" cy="58" rx="8" ry="4" fill="#a888d8" opacity="1"/><polygon points="82,66 104,64 110,78 80,78" fill="#222" opacity="1"/><polygon points="80,74 88,74 84,78" fill="#d03030" opacity="1"/><polygon points="100,74 109,74 108,78" fill="#d03030" opacity="1"/><ellipse cx="86" cy="104" rx="5" ry="6" fill="#666" opacity="1"/><ellipse cx="99" cy="103" rx="5" ry="6" fill="#444" opacity="1"/><polygon points="78,112 104,110 104,128 78,128" fill="#3a3a3a" opacity="1"/><ellipse cx="57" cy="138" rx="6" ry="6" fill="#777" opacity="1"/><polygon points="47,155 70,152 72,165 46,165" fill="#888" opacity="1"/><ellipse cx="57" cy="146" rx="5" ry="5" fill="#f0f0f0" opacity="1"/><g transform="translate(0 -1.3)"><rect x="13.5" y="19" width="119" height="168" fill="none" stroke="#6d6d9e" stroke-width="2.6"/><rect x="24" y="32" width="98" height="142" fill="none" stroke="rgba(96,96,158,0.52)" stroke-width="1.8"/><path d="M14.5 11.5V18M14.5 188V194.5M131.5 11.5V18M131.5 188V194.5M9 19.5H12.5M133.5 19.5H137M9 186.5H12.5M133.5 186.5H137M68 15.5H78M73 11.5V18M68 190H78M73 188V194.5M8 102.5H12.5M11 97.5V107.5M133.5 102.5H138M135 97.5V107.5" stroke="#6d6d9e" stroke-width="1.6" fill="none"/></g><rect x="0.5" y="0.5" width="145" height="204" fill="none" stroke="#141414" stroke-width="1.2"/></svg>
<svg class="pg" style="left:743px;top:513px" width="146" height="205" viewBox="0 0 146 205"><rect x="0" y="0" width="146" height="205" fill="#b4b0af"/><rect x="13" y="17.7" width="120" height="168" fill="#fff"/><rect x="14" y="19" width="118" height="8" fill="#000" opacity="1"/><rect x="14" y="27" width="118" height="75" fill="#87663e" opacity="1"/><polygon points="14,27 60,27 65,45 55,60 50,75 30,100 14,102" fill="#f0c89e" opacity="1"/><polygon points="60,27 86,27 90,50 85,70 95,102 60,102 65,70" fill="#f4d2aa" opacity="1"/><polygon points="34,75 70,70 65,102 30,102" fill="#6a4d2a" opacity="1"/><rect x="14" y="102" width="118" height="13" fill="#3a0a16" opacity="1"/><rect x="14" y="115" width="118" height="62" fill="#7a1616" opacity="1"/><polygon points="14,115 50,115 50,125 14,125" fill="#932020" opacity="0.7"/><polygon points="88,115 132,115 132,125 88,125" fill="#932020" opacity="0.7"/><ellipse cx="74" cy="95" rx="17" ry="14" fill="#5b534c" opacity="1"/><ellipse cx="75" cy="107" rx="10" ry="10" fill="#d6cccc" opacity="1"/><polygon points="40,128 105,128 103,177 38,177" fill="#4a3530" opacity="1"/><polygon points="62,122 88,122 86,140 64,140" fill="#cfc4c4" opacity="1"/><rect x="14" y="177" width="118" height="8" fill="#000" opacity="1"/><rect x="38" y="165" width="12" height="9" fill="#e0d8d8" opacity="1"/><rect x="98" y="165" width="12" height="9" fill="#e0d8d8" opacity="1"/><g transform="translate(0 -1.3)"><rect x="13.5" y="19" width="119" height="168" fill="none" stroke="#6d6d9e" stroke-width="2.6"/><rect x="24" y="32" width="98" height="142" fill="none" stroke="rgba(96,96,158,0.52)" stroke-width="1.8"/><path d="M14.5 11.5V18M14.5 188V194.5M131.5 11.5V18M131.5 188V194.5M9 19.5H12.5M133.5 19.5H137M9 186.5H12.5M133.5 186.5H137M68 15.5H78M73 11.5V18M68 190H78M73 188V194.5M8 102.5H12.5M11 97.5V107.5M133.5 102.5H138M135 97.5V107.5" stroke="#6d6d9e" stroke-width="1.6" fill="none"/></g><rect x="0.5" y="0.5" width="145" height="204" fill="none" stroke="#141414" stroke-width="1.2"/></svg>
<svg class="pg" style="left:936px;top:224px" width="146" height="205" viewBox="0 0 146 205"><rect x="0" y="0" width="146" height="205" fill="#b4b0af"/><rect x="13" y="19" width="120" height="168" fill="#fff"/><rect x="19" y="81" width="53" height="77" fill="#6ecdf2" opacity="1"/><polygon points="40,95 60,88 75,100 72,130 95,160 100,178 60,182 25,180 40,150 45,120" fill="#e6e6e6" opacity="0.95"/><polygon points="35,100 55,92 70,140 40,150" fill="#dff1fa" opacity="0.8"/><ellipse cx="70" cy="176" rx="22" ry="5" fill="#c8c8c8" opacity="1"/><path d="M40 95 Q60 85 72 105 M30 178 L50 140 M60 150 L95 175 M45 120 L70 125" stroke="#666" stroke-width="0.9" fill="none" opacity="0.8"/><ellipse cx="100" cy="49" rx="11" ry="9" fill="#c8aee8" opacity="1"/><ellipse cx="92" cy="58" rx="7" ry="5" fill="#f2e0d0" opacity="1"/><polygon points="85,62 93,64 92,76 84,74" fill="#d83030" opacity="1"/><ellipse cx="106" cy="60" rx="6" ry="3" fill="#8ab0d8" opacity="1"/><path d="M52.3 56.7Q43.5 63.9 46.4 62.2M40.4 54.1Q41.5 60.4 46.0 55.0M50.2 53.0Q43.8 61.4 43.2 63.1M35.0 54.4Q49.1 62.6 43.9 61.8M56.3 58.9Q48.5 58.2 47.8 62.1" stroke="#666" stroke-width="0.8" fill="none" opacity="0.55"/><path d="M32 69 H55 M32 72 H63 M32 75 H55" stroke="#222" stroke-width="1.2" fill="none" opacity="0.7"/><path d="M96.4 106.5Q120.4 108.4 123.0 114.1M89.0 123.1Q94.0 97.6 97.8 131.7M125.1 124.6Q113.3 125.4 112.6 120.2M87.4 124.8Q105.1 116.7 90.7 128.2M105.4 125.2Q103.2 125.3 101.2 135.0M119.2 110.0Q124.1 124.7 120.3 116.9M85.0 97.0Q124.2 130.0 122.5 107.0M112.5 97.2Q89.7 130.6 116.7 108.1M102.6 132.1Q116.4 124.2 106.4 101.4" stroke="#777" stroke-width="0.8" fill="none" opacity="0.55"/><g transform="translate(0 0)"><rect x="13.5" y="19" width="119" height="168" fill="none" stroke="#6d6d9e" stroke-width="2.6"/><rect x="24" y="32" width="98" height="142" fill="none" stroke="rgba(96,96,158,0.52)" stroke-width="1.8"/><path d="M14.5 11.5V18M14.5 188V194.5M131.5 11.5V18M131.5 188V194.5M9 19.5H12.5M133.5 19.5H137M9 186.5H12.5M133.5 186.5H137M68 15.5H78M73 11.5V18M68 190H78M73 188V194.5M8 102.5H12.5M11 97.5V107.5M133.5 102.5H138M135 97.5V107.5" stroke="#6d6d9e" stroke-width="1.6" fill="none"/></g><rect x="0.5" y="0.5" width="145" height="204" fill="none" stroke="#141414" stroke-width="1.2"/></svg>
<svg class="pg" style="left:1097px;top:224px" width="146" height="205" viewBox="0 0 146 205"><rect x="0" y="0" width="146" height="205" fill="#000"/><rect x="0" y="28" width="146" height="150" fill="#1f1f1f" opacity="1"/><polygon points="42,28 100,28 139,177 4,177" fill="#3e3e3e" opacity="0.75"/><defs><radialGradient id="cg" cx="0.55" cy="0.6" r="0.6"><stop offset="0" stop-color="#fffbe0"/><stop offset="1" stop-color="#ede38a"/></radialGradient></defs><circle cx="73" cy="73" r="33" fill="url(#cg)" stroke="#111" stroke-width="1.2"/><polygon points="71,46 73,46 75.5,72 73.5,100 72.5,100 70.5,72" fill="#111" opacity="1"/><ellipse cx="55" cy="108" rx="24" ry="19" fill="#8b77c8" opacity="1"/><polygon points="35,120 62,118 90,140 95,177 28,177 30,145" fill="#2a2448" opacity="1"/><polygon points="60,140 95,132 98,150 70,158" fill="#6a6a40" opacity="1"/><polygon points="85,92 100,90 108,130 90,138" fill="#b8b8c8" opacity="1"/><rect x="20" y="154" width="50" height="23" fill="#3a2640" opacity="0.9"/><g transform="translate(0 0)"><rect x="13.5" y="19" width="119" height="168" fill="none" stroke="rgba(70,70,190,0.38)" stroke-width="2.6"/><rect x="24" y="32" width="98" height="142" fill="none" stroke="rgba(70,70,190,0.3)" stroke-width="1.8"/><path d="M14.5 11.5V18M14.5 188V194.5M131.5 11.5V18M131.5 188V194.5M9 19.5H12.5M133.5 19.5H137M9 186.5H12.5M133.5 186.5H137M68 15.5H78M73 11.5V18M68 190H78M73 188V194.5M8 102.5H12.5M11 97.5V107.5M133.5 102.5H138M135 97.5V107.5" stroke="rgba(70,70,190,0.38)" stroke-width="1.6" fill="none"/></g><rect x="0.5" y="0.5" width="145" height="204" fill="none" stroke="#141414" stroke-width="1.2"/></svg>
<svg class="pg" style="left:936px;top:513px" width="146" height="205" viewBox="0 0 146 205"><rect x="0" y="0" width="146" height="205" fill="#b4b0af"/><rect x="13" y="17.7" width="120" height="168" fill="#fff"/><rect x="15" y="136" width="116" height="32" fill="#2c78e8" opacity="1"/><ellipse cx="56" cy="45" rx="17" ry="14" fill="#d95c22" opacity="1"/><ellipse cx="58" cy="50" rx="9" ry="9" fill="#f6f0ec" opacity="1"/><polygon points="45,59 56,59 54,70 46,68" fill="#e04a20" opacity="1"/><polygon points="36,62 70,62 72,116 40,116 24,100 34,84" fill="#2a2a2a" opacity="1"/><path d="M118.2 47.6Q85.9 64.4 103.1 55.0M117.6 50.3Q96.8 38.6 114.3 58.1M85.9 62.6Q113.1 43.6 84.2 34.4M109.8 45.6Q104.4 46.7 107.4 47.8M109.6 41.9Q91.3 48.1 110.5 38.6M93.0 39.0Q109.7 39.2 110.8 65.5M93.8 60.1Q103.8 39.7 115.6 36.7M117.5 64.2Q98.5 43.7 95.5 55.0M119.0 48.9Q80.0 34.5 94.3 65.7" stroke="#555" stroke-width="0.8" fill="none" opacity="0.55"/><ellipse cx="102" cy="99" rx="12" ry="14" fill="#f2f2f2" opacity="1"/><path d="M90 88 Q102 80 114 88 Q118 110 100 118 Q86 112 90 88" stroke="#555" stroke-width="1" fill="none" opacity="1"/><ellipse cx="98" cy="100" rx="2" ry="2" fill="#d02020" opacity="1"/><ellipse cx="106" cy="100" rx="2" ry="2" fill="#d02020" opacity="1"/><polygon points="45,128 70,126 72,138 42,140" fill="#2a50b8" opacity="1"/><polygon points="72,125 95,124 96,136 70,138" fill="#2a50b8" opacity="1"/><ellipse cx="62" cy="148" rx="9" ry="10" fill="#f0f0f0" opacity="1"/><ellipse cx="85" cy="146" rx="9" ry="10" fill="#f0f0f0" opacity="1"/><polygon points="44,155 78,152 80,172 40,172" fill="#1e44a8" opacity="1"/><polygon points="70,152 108,150 110,172 68,172" fill="#1e44a8" opacity="1"/><path d="M52 160 L45 172" stroke="#333" stroke-width="1.2" fill="none" opacity="1"/><g transform="translate(0 -1.3)"><rect x="13.5" y="19" width="119" height="168" fill="none" stroke="#6d6d9e" stroke-width="2.6"/><rect x="24" y="32" width="98" height="142" fill="none" stroke="rgba(96,96,158,0.52)" stroke-width="1.8"/><path d="M14.5 11.5V18M14.5 188V194.5M131.5 11.5V18M131.5 188V194.5M9 19.5H12.5M133.5 19.5H137M9 186.5H12.5M133.5 186.5H137M68 15.5H78M73 11.5V18M68 190H78M73 188V194.5M8 102.5H12.5M11 97.5V107.5M133.5 102.5H138M135 97.5V107.5" stroke="#6d6d9e" stroke-width="1.6" fill="none"/></g><rect x="0.5" y="0.5" width="145" height="204" fill="none" stroke="#141414" stroke-width="1.2"/></svg>
<svg class="pg" style="left:1097px;top:513px" width="146" height="205" viewBox="0 0 146 205"><rect x="0" y="0" width="146" height="205" fill="#b4b0af"/><rect x="13" y="17.7" width="120" height="168" fill="#fff"/><path d="M43.5 52.5Q40.1 41.6 55.6 39.7M31.3 35.8Q45.1 41.2 50.3 55.3M49.3 54.7Q49.3 52.3 52.2 46.1M40.9 54.5Q37.6 54.2 36.2 63.3M35.7 40.0Q33.4 49.1 47.2 64.3M51.6 64.1Q51.6 51.9 41.0 57.0M48.9 35.7Q43.5 54.0 30.1 64.8M36.4 50.9Q47.1 62.1 46.8 55.0M37.2 58.9Q51.4 48.2 50.0 53.8M41.1 55.0Q50.9 45.0 30.3 58.6" stroke="#666" stroke-width="0.8" fill="none" opacity="0.55"/><path d="M77.7 55.0Q63.0 50.8 61.0 51.1M93.1 45.5Q84.2 57.9 88.9 41.3M62.6 54.6Q71.6 51.7 61.0 49.5M72.7 39.2Q60.3 52.4 87.2 57.5M69.1 52.1Q65.4 39.7 73.2 43.4M79.6 44.2Q74.6 50.4 67.2 50.2M66.5 39.1Q71.9 44.1 79.0 57.9M80.9 46.7Q93.6 40.1 82.3 41.8M71.6 55.9Q65.4 52.6 87.6 47.4" stroke="#666" stroke-width="0.8" fill="none" opacity="0.55"/><path d="M52.7 117.0Q59.1 87.9 57.6 89.1M58.4 112.2Q55.0 106.1 39.9 90.7M68.3 83.3Q54.6 114.0 42.3 87.7M56.5 89.4Q61.8 96.3 64.8 117.0M51.8 101.8Q54.9 96.8 42.6 87.5M63.2 83.3Q60.7 97.4 41.7 82.1M68.1 80.4Q37.0 87.3 43.8 94.8M56.7 106.2Q57.8 109.0 67.8 116.1M36.4 110.3Q47.2 88.8 45.0 114.1M45.4 94.0Q52.9 93.7 44.7 98.7" stroke="#666" stroke-width="0.8" fill="none" opacity="0.55"/><path d="M108.0 103.3Q109.6 86.0 83.5 80.1M99.3 80.6Q92.9 104.7 93.2 93.2M78.6 102.0Q78.3 83.0 90.0 90.9M97.2 82.6Q96.0 83.0 97.3 84.4M111.6 95.5Q97.7 90.6 79.5 100.2M107.0 87.2Q87.4 99.6 99.0 100.0M79.1 103.4Q96.3 96.4 95.4 85.8M103.5 82.6Q98.6 87.0 110.0 81.9M80.2 80.8Q106.7 81.5 106.5 96.1" stroke="#777" stroke-width="0.8" fill="none" opacity="0.55"/><ellipse cx="108" cy="140" rx="11" ry="15" fill="#c8c8c8" opacity="1"/><polygon points="100,150 120,148 128,178 100,178" fill="#bdbdbd" opacity="1"/><rect x="94" y="158" width="10" height="14" fill="#5a90f0" opacity="1"/><path d="M77 152 V177 M77 154 H111 M84 154 V177 M90 154 V177 M96 154 V177 M103 154 V177 M111 154 V177 M77 177 H111" stroke="#777" stroke-width="1" fill="none" opacity="1"/><g transform="translate(0 -1.3)"><rect x="13.5" y="19" width="119" height="168" fill="none" stroke="#6d6d9e" stroke-width="2.6"/><rect x="24" y="32" width="98" height="142" fill="none" stroke="rgba(96,96,158,0.52)" stroke-width="1.8"/><path d="M14.5 11.5V18M14.5 188V194.5M131.5 11.5V18M131.5 188V194.5M9 19.5H12.5M133.5 19.5H137M9 186.5H12.5M133.5 186.5H137M68 15.5H78M73 11.5V18M68 190H78M73 188V194.5M8 102.5H12.5M11 97.5V107.5M133.5 102.5H138M135 97.5V107.5" stroke="#6d6d9e" stroke-width="1.6" fill="none"/></g><rect x="0.5" y="0.5" width="145" height="204" fill="none" stroke="#141414" stroke-width="1.2"/></svg>
<svg class="pg" style="left:1291px;top:224px" width="146" height="205" viewBox="0 0 146 205"><rect x="0" y="0" width="146" height="205" fill="#b4b0af"/><rect x="13" y="19" width="120" height="168" fill="#fff"/><polygon points="33,88 42,80 46,90 40,100" fill="#fff" opacity="1"/><path d="M30 92 L34 84 L42 82 L44 96 L36 100 Z" stroke="#555" stroke-width="0.8" fill="none" opacity="1"/><path d="M35 88 Q39 84 38 92" stroke="#e04040" stroke-width="1.5" fill="none" opacity="1"/><ellipse cx="51" cy="94" rx="14" ry="12" fill="#c8b0ea" opacity="1"/><ellipse cx="51" cy="104" rx="7" ry="6" fill="#f0e0d8" opacity="1"/><polygon points="38,108 62,104 70,120 68,145 40,148 34,130" fill="#2e2e2e" opacity="1"/><polygon points="36,130 70,128 72,148 32,150" fill="#5a4c4c" opacity="1"/><polygon points="68,105 88,110 88,130 70,128" fill="#bdbdbd" opacity="1"/><polygon points="66,130 92,128 90,150 62,150" fill="#d8d0c8" opacity="1"/><ellipse cx="84" cy="61" rx="6" ry="6" fill="#444" opacity="1"/><polygon points="78,66 92,66 92,82 80,82" fill="#888" opacity="1"/><ellipse cx="101" cy="60" rx="6" ry="6" fill="#d8d8d8" opacity="1"/><polygon points="88,65 118,66 116,71 90,72" fill="#333" opacity="1"/><polygon points="94,70 108,70 110,84 94,84" fill="#555" opacity="1"/><path d="M94.3 150.4Q81.5 140.1 82.6 158.1M114.7 154.7Q106.8 160.2 98.6 160.5M107.2 168.3Q83.3 167.3 84.1 164.0M119.4 160.9Q83.8 140.0 91.0 167.2M106.1 164.4Q97.8 165.5 88.9 144.1M96.4 161.3Q113.6 151.2 95.2 167.4M113.9 141.6Q116.5 161.7 89.5 170.5M113.5 151.6Q117.8 168.7 96.9 162.6M103.4 147.5Q110.8 159.3 119.4 166.7" stroke="#666" stroke-width="0.8" fill="none" opacity="0.55"/><g transform="translate(0 0)"><rect x="13.5" y="19" width="119" height="168" fill="none" stroke="#6d6d9e" stroke-width="2.6"/><rect x="24" y="32" width="98" height="142" fill="none" stroke="rgba(96,96,158,0.52)" stroke-width="1.8"/><path d="M14.5 11.5V18M14.5 188V194.5M131.5 11.5V18M131.5 188V194.5M9 19.5H12.5M133.5 19.5H137M9 186.5H12.5M133.5 186.5H137M68 15.5H78M73 11.5V18M68 190H78M73 188V194.5M8 102.5H12.5M11 97.5V107.5M133.5 102.5H138M135 97.5V107.5" stroke="#6d6d9e" stroke-width="1.6" fill="none"/></g><rect x="0.5" y="0.5" width="145" height="204" fill="none" stroke="#141414" stroke-width="1.2"/></svg>
<svg class="pg" style="left:1452px;top:224px" width="146" height="205" viewBox="0 0 146 205"><rect x="0" y="0" width="146" height="205" fill="#b4b0af"/><rect x="13" y="19" width="120" height="168" fill="#fff"/><ellipse cx="40" cy="42" rx="12" ry="8" fill="#c9b0e6" opacity="1"/><ellipse cx="47" cy="30" rx="15" ry="6.5" fill="#363636" transform="rotate(-12 47 30)"/><polygon points="26,40 33,37 34,43 28,44" fill="#d83030" opacity="1"/><polygon points="22,58 36,46 56,40 62,34 70,40 68,52 54,60 40,68 26,66" fill="#b02e1e" opacity="1"/><polygon points="26,64 50,62 53,80 44,88 30,88" fill="#2f6078" opacity="1"/><polygon points="46,76 58,78 62,84 50,98 44,96 52,86 46,84" fill="#c03a20" opacity="1"/><path d="M30 86 L36 100" stroke="#555" stroke-width="0.8" fill="none" opacity="1"/><path d="M75.4 61.8Q79.0 63.1 58.4 61.1M70.4 66.3Q76.6 69.4 85.3 60.1M88.1 60.1Q78.8 70.1 73.3 62.3M73.8 68.2Q88.3 62.7 70.7 68.2M62.3 70.9Q75.8 72.7 74.1 70.6M59.0 61.1Q85.9 71.6 81.7 68.7M77.2 62.2Q84.7 65.1 89.4 74.5M84.3 67.2Q65.6 70.5 77.8 68.2M67.6 73.3Q68.6 65.0 60.9 60.8M85.3 73.9Q63.6 74.6 63.5 61.0" stroke="#444" stroke-width="0.8" fill="none" opacity="0.75"/><ellipse cx="20" cy="42" rx="3" ry="3" fill="#f0c030" opacity="1"/><rect x="92" y="97" width="33" height="33" fill="#e2404a" opacity="1"/><ellipse cx="108" cy="106" rx="9" ry="7" fill="#c0a8e0" opacity="1"/><ellipse cx="106" cy="100" rx="8" ry="3" fill="#e24040" opacity="1"/><polygon points="98,114 122,114 122,130 98,130" fill="#f2eeee" opacity="1"/><rect x="20" y="149" width="46" height="18" fill="#4b1f78" opacity="1"/><ellipse cx="42" cy="140" rx="10" ry="8" fill="#d8c8f0" opacity="1"/><ellipse cx="41" cy="144" rx="5" ry="5" fill="#f4f4f4" opacity="1"/><polygon points="31,151 55,151 57,178 31,178" fill="#9060c0" opacity="1"/><polygon points="38,156 48,156 44,166" fill="#303030" opacity="1"/><polygon points="38,168 48,168 43,174" fill="#d04030" opacity="1"/><g transform="translate(0 0)"><rect x="13.5" y="19" width="119" height="168" fill="none" stroke="#6d6d9e" stroke-width="2.6"/><rect x="24" y="32" width="98" height="142" fill="none" stroke="rgba(96,96,158,0.52)" stroke-width="1.8"/><path d="M14.5 11.5V18M14.5 188V194.5M131.5 11.5V18M131.5 188V194.5M9 19.5H12.5M133.5 19.5H137M9 186.5H12.5M133.5 186.5H137M68 15.5H78M73 11.5V18M68 190H78M73 188V194.5M8 102.5H12.5M11 97.5V107.5M133.5 102.5H138M135 97.5V107.5" stroke="#6d6d9e" stroke-width="1.6" fill="none"/></g><rect x="0.5" y="0.5" width="145" height="204" fill="none" stroke="#141414" stroke-width="1.2"/></svg>
<svg class="pg" style="left:1291px;top:513px" width="146" height="205" viewBox="0 0 146 205"><rect x="0" y="0" width="146" height="205" fill="#b4b0af"/><rect x="13" y="17.7" width="120" height="168" fill="#fff"/><ellipse cx="82" cy="40" rx="14" ry="13" fill="#c0a0e6" opacity="1"/><ellipse cx="85" cy="48" rx="6" ry="6" fill="#f2e6e6" opacity="1"/><polygon points="72,52 98,46 104,80 70,84" fill="#2c2c2c" opacity="1"/><polygon points="60,86 74,74 106,72 128,84 112,88 74,92" fill="#2c2c2c" opacity="1"/><polygon points="71,80 118,80 112,103 74,98" fill="#e24848" opacity="1"/><polygon points="80,98 88,98 86,107 78,107" fill="#c8a878" opacity="1"/><rect x="100" y="96" width="12" height="12" fill="#555" opacity="1"/><rect x="97" y="34" width="10" height="14" fill="#333" opacity="1"/><path d="M36.4 82.6Q38.7 88.4 49.0 75.5M25.8 76.3Q28.2 76.5 30.1 76.9M55.0 64.9Q50.1 72.6 51.9 83.4M32.1 76.2Q31.3 82.6 37.8 90.7M28.1 68.7Q50.3 89.0 51.0 83.7M44.7 79.6Q25.6 86.3 53.9 87.5M26.0 85.4Q30.6 88.2 36.3 82.7M30.0 84.4Q47.5 72.2 35.0 96.7M29.3 93.2Q38.1 86.1 39.6 76.2M53.9 76.9Q34.8 92.6 27.9 92.6" stroke="#888" stroke-width="0.8" fill="none" opacity="0.55"/><ellipse cx="50" cy="117" rx="13" ry="12" fill="#c0a0e6" opacity="1"/><ellipse cx="52" cy="126" rx="6" ry="6" fill="#f0e6e6" opacity="1"/><ellipse cx="35" cy="140" rx="10" ry="8" fill="#222" opacity="1"/><ellipse cx="75" cy="142" rx="12" ry="8" fill="#222" opacity="1"/><rect x="18" y="138" width="8" height="4" fill="#d03030" opacity="1"/><polygon points="22,148 40,148 42,168 22,168" fill="#2060d0" opacity="1"/><polygon points="30,155 70,152 65,178 58,180 40,170" fill="#e03030" opacity="1"/><polygon points="60,150 80,150 80,166 60,166" fill="#f2c420" opacity="1"/><polygon points="42,138 62,138 64,160 44,160" fill="#d8c08e" opacity="1"/><path d="M126.0 154.3Q119.2 124.7 93.2 127.3M92.2 149.9Q106.4 156.5 121.1 146.7M92.3 133.5Q93.4 129.1 92.9 138.2M114.8 132.4Q108.9 161.5 105.9 157.5M113.7 131.5Q94.2 163.2 127.6 158.5M92.5 134.3Q109.3 126.0 126.3 125.4M126.2 158.6Q123.4 143.3 97.5 123.3M123.9 147.8Q93.0 150.3 110.1 129.1M126.0 158.0Q119.9 145.7 97.7 157.6M98.8 134.2Q126.3 123.2 112.2 156.5" stroke="#555" stroke-width="0.8" fill="none" opacity="0.55"/><g transform="translate(0 -1.3)"><rect x="13.5" y="19" width="119" height="168" fill="none" stroke="#6d6d9e" stroke-width="2.6"/><rect x="24" y="32" width="98" height="142" fill="none" stroke="rgba(96,96,158,0.52)" stroke-width="1.8"/><path d="M14.5 11.5V18M14.5 188V194.5M131.5 11.5V18M131.5 188V194.5M9 19.5H12.5M133.5 19.5H137M9 186.5H12.5M133.5 186.5H137M68 15.5H78M73 11.5V18M68 190H78M73 188V194.5M8 102.5H12.5M11 97.5V107.5M133.5 102.5H138M135 97.5V107.5" stroke="#6d6d9e" stroke-width="1.6" fill="none"/></g><rect x="0.5" y="0.5" width="145" height="204" fill="none" stroke="#141414" stroke-width="1.2"/></svg>
<svg class="pg" style="left:1452px;top:513px" width="146" height="205" viewBox="0 0 146 205"><rect x="0" y="0" width="146" height="205" fill="#b4b0af"/><rect x="13" y="17.7" width="120" height="168" fill="#fff"/><rect x="33" y="25" width="80" height="53" fill="#d9d9d9" opacity="1"/><path d="M33 25 H113 V78 H33 Z" stroke="#222" stroke-width="1" fill="none" opacity="1"/><polygon points="33,25 60,25 55,50 33,48" fill="#8a8a8a" opacity="1"/><polygon points="52,48 70,42 92,50 90,64 72,68 56,62" fill="#3a3a3a" opacity="0.9"/><polygon points="96,25 113,25 113,78 98,78" fill="#bfbfbf" opacity="1"/><path d="M81.7 48.1Q97.7 40.2 67.3 40.4M55.6 59.4Q38.3 30.2 108.0 34.5M67.7 59.9Q49.5 38.2 105.6 54.8M97.0 33.9Q46.9 47.7 67.6 51.5M56.8 54.4Q45.1 63.0 49.9 38.1M106.7 46.6Q75.3 51.6 92.6 67.7M98.9 70.9Q36.3 58.1 66.1 42.9M41.3 48.3Q67.9 51.0 58.8 51.0M50.6 55.4Q91.8 67.4 97.6 52.7M108.2 46.6Q47.3 63.7 53.9 39.4M35.3 53.5Q104.5 61.3 92.3 50.4M106.7 46.9Q90.8 55.5 61.9 63.4" stroke="#666" stroke-width="0.8" fill="none" opacity="0.55"/><path d="M23.1 96.4Q55.6 123.7 57.0 101.8M34.9 90.3Q48.0 120.3 48.9 89.2M33.0 110.3Q56.8 92.1 54.9 86.5M57.2 109.5Q40.1 88.7 61.1 123.8M67.5 116.6Q24.4 119.2 45.7 127.5M22.0 108.6Q36.4 125.5 38.1 96.5M58.0 119.5Q58.8 112.4 53.9 106.8M42.6 104.5Q60.3 94.9 53.1 126.6M52.6 110.7Q50.3 91.9 21.1 108.9M43.6 111.1Q45.3 107.5 58.0 123.5" stroke="#888" stroke-width="0.8" fill="none" opacity="0.55"/><path d="M66.0 95.4Q67.0 107.4 76.9 100.9M84.1 88.1Q66.5 111.7 68.1 102.1M74.4 91.5Q73.7 97.8 81.5 103.7M83.1 95.1Q79.2 101.7 79.3 102.4M81.3 94.8Q70.7 96.1 80.5 111.9M69.6 100.3Q70.6 100.2 72.1 111.0" stroke="#555" stroke-width="0.8" fill="none" opacity="0.55"/><ellipse cx="105" cy="112" rx="12" ry="10" fill="#f0f0f0" opacity="1"/><path d="M98.2 107.6Q102.2 112.0 99.9 118.2M102.3 107.2Q108.0 112.3 112.8 113.9M98.3 103.4Q93.1 117.7 119.1 114.8M110.8 106.0Q90.8 118.5 92.0 107.3M100.0 101.2Q101.1 112.0 102.2 117.2M118.9 101.3Q112.2 104.4 114.2 113.8" stroke="#888" stroke-width="0.8" fill="none" opacity="0.55"/><rect x="82" y="122" width="14" height="8" fill="#e05050" opacity="0.8"/><rect x="104" y="124" width="10" height="7" fill="#4a80e0" opacity="0.8"/><path d="M44.8 152.4Q33.6 142.3 36.5 140.5M43.9 142.1Q41.0 133.6 22.9 151.5M49.7 131.7Q26.0 146.5 31.7 140.2M38.0 143.0Q35.2 143.1 47.4 132.2M39.6 157.8Q44.6 140.5 40.8 136.8M38.5 146.3Q22.7 134.9 26.0 136.5M40.8 151.6Q29.9 142.9 25.0 153.0M36.2 148.1Q39.0 136.5 30.4 142.1" stroke="#666" stroke-width="0.8" fill="none" opacity="0.55"/><path d="M76.9 165.9Q65.6 177.5 65.4 175.0M86.9 176.3Q68.7 150.6 73.2 141.6M117.7 165.8Q98.5 177.7 101.1 147.5M55.6 148.9Q84.7 157.0 119.4 163.6M87.1 139.6Q85.3 142.0 114.3 152.8M117.8 160.8Q91.7 146.0 116.8 174.5M112.0 146.9Q74.7 142.7 91.6 144.9M82.1 144.8Q86.6 159.0 103.3 146.0M56.5 146.8Q82.9 161.1 97.2 160.7M99.5 150.6Q93.7 160.8 105.5 147.1M105.7 143.7Q92.7 177.9 88.6 157.5M64.9 152.5Q80.9 166.1 81.8 167.1M93.3 152.1Q58.1 156.2 75.6 167.3M73.4 173.5Q119.5 139.6 65.7 142.4" stroke="#555" stroke-width="0.8" fill="none" opacity="0.55"/><g transform="translate(0 -1.3)"><rect x="13.5" y="19" width="119" height="168" fill="none" stroke="#6d6d9e" stroke-width="2.6"/><rect x="24" y="32" width="98" height="142" fill="none" stroke="rgba(96,96,158,0.52)" stroke-width="1.8"/><path d="M14.5 11.5V18M14.5 188V194.5M131.5 11.5V18M131.5 188V194.5M9 19.5H12.5M133.5 19.5H137M9 186.5H12.5M133.5 186.5H137M68 15.5H78M73 11.5V18M68 190H78M73 188V194.5M8 102.5H12.5M11 97.5V107.5M133.5 102.5H138M135 97.5V107.5" stroke="#6d6d9e" stroke-width="1.6" fill="none"/></g><rect x="0.5" y="0.5" width="145" height="204" fill="none" stroke="#141414" stroke-width="1.2"/></svg>
<svg class="pg" style="left:1645px;top:224px" width="146" height="205" viewBox="0 0 146 205"><rect x="0" y="0" width="146" height="205" fill="#b4b0af"/><rect x="13" y="19" width="120" height="168" fill="#fff"/><polygon points="55,30 62,23 84,23 90,30 90,82 55,82" fill="#161616" opacity="1"/><rect x="59" y="33" width="27" height="41" fill="#e23a3a" opacity="1"/><path d="M58 29 Q72 18 87 29" stroke="#d8b840" stroke-width="1.5" fill="none" opacity="1"/><ellipse cx="72" cy="45" rx="6" ry="6" fill="#c8b0e8" opacity="1"/><polygon points="64,52 80,52 82,72 62,72" fill="#222" opacity="1"/><rect x="72" y="58" width="4" height="14" fill="#f0b030" opacity="0.7"/><path d="M44.6 71.3Q52.5 76.6 30.0 55.1M44.2 49.1Q33.9 54.7 50.4 38.8M32.5 51.7Q50.4 51.7 48.7 73.6M54.0 71.1Q36.4 62.0 49.4 37.2M39.2 58.6Q32.1 72.1 41.2 43.5M41.6 73.8Q38.1 51.3 49.6 75.6M45.2 46.9Q46.5 60.8 37.5 60.8M32.9 66.2Q39.4 57.7 37.1 60.1" stroke="#888" stroke-width="0.8" fill="none" opacity="0.55"/><path d="M99.3 45.4Q101.6 39.7 109.7 64.3M89.0 61.2Q96.2 53.2 108.2 73.3M99.3 47.7Q104.4 43.3 92.6 50.0M112.7 50.2Q109.8 62.3 101.8 53.8M96.9 40.1Q106.2 36.3 102.6 72.7M115.4 35.7Q88.8 40.6 102.4 75.8M115.0 50.2Q101.2 66.2 97.2 74.2M93.3 60.8Q93.1 36.0 101.2 76.7" stroke="#888" stroke-width="0.8" fill="none" opacity="0.55"/><ellipse cx="63" cy="91" rx="5" ry="5" fill="#222" opacity="1"/><polygon points="56,96 70,96 72,118 58,118" fill="#222" opacity="1"/><ellipse cx="80" cy="93" rx="5" ry="5" fill="#c8b0e8" opacity="1"/><polygon points="74,98 86,98 92,118 72,118" fill="#d83838" opacity="1"/><rect x="26" y="124" width="93" height="55" fill="#d8d8d8" opacity="1"/><polygon points="26,124 119,124 119,179 26,179" fill="none" opacity="1"/><path d="M26 124 H119 V179 H26 Z" stroke="#777" stroke-width="0.8" fill="none" opacity="1"/><polygon points="50,124 95,124 85,138 60,138" fill="#e03a3a" opacity="1"/><ellipse cx="70" cy="150" rx="12" ry="18" fill="#f4f4f4" opacity="1"/><path d="M109.7 162.3Q45.8 163.2 57.6 153.3M42.4 132.2Q92.2 175.7 67.7 173.1M39.8 174.2Q90.1 149.2 82.5 160.2M110.2 152.7Q83.4 164.3 47.7 133.1M97.0 140.3Q52.9 129.2 114.3 162.5M111.8 173.8Q77.8 149.4 108.2 129.4M58.3 154.2Q74.1 144.4 71.7 133.6M53.7 136.2Q42.2 158.8 75.6 139.5M110.7 126.8Q57.3 149.0 70.4 157.8M83.1 144.7Q91.2 158.1 89.2 149.7M114.4 129.2Q41.6 162.3 99.4 158.8M64.5 149.3Q98.0 137.4 92.0 126.7" stroke="#555" stroke-width="0.8" fill="none" opacity="0.55"/><rect x="26" y="160" width="93" height="19" fill="#bdbdbd" opacity="0.6"/><g transform="translate(0 0)"><rect x="13.5" y="19" width="119" height="168" fill="none" stroke="#6d6d9e" stroke-width="2.6"/><rect x="24" y="32" width="98" height="142" fill="none" stroke="rgba(96,96,158,0.52)" stroke-width="1.8"/><path d="M14.5 11.5V18M14.5 188V194.5M131.5 11.5V18M131.5 188V194.5M9 19.5H12.5M133.5 19.5H137M9 186.5H12.5M133.5 186.5H137M68 15.5H78M73 11.5V18M68 190H78M73 188V194.5M8 102.5H12.5M11 97.5V107.5M133.5 102.5H138M135 97.5V107.5" stroke="#6d6d9e" stroke-width="1.6" fill="none"/></g><rect x="0.5" y="0.5" width="145" height="204" fill="none" stroke="#141414" stroke-width="1.2"/></svg>
<svg class="pg" style="left:1806px;top:224px" width="146" height="205" viewBox="0 0 146 205"><rect x="0" y="0" width="146" height="205" fill="#b4b0af"/><rect x="13" y="19" width="120" height="168" fill="#fff"/><rect x="14" y="20" width="118" height="52" fill="#e8e8e8" opacity="1"/><path d="M47.6 25.6Q65.4 23.3 58.7 40.6M18.1 50.5Q53.6 30.8 54.6 62.5M55.3 32.2Q36.3 32.1 56.9 67.6M38.7 46.9Q59.5 48.6 61.2 25.9M56.6 34.6Q27.0 36.7 36.1 62.0M26.4 63.4Q22.9 44.1 31.1 51.2M30.0 52.0Q33.3 23.8 31.2 61.9M34.9 28.4Q52.1 62.4 42.8 30.0M22.2 51.6Q46.6 32.3 63.5 63.3M60.1 46.2Q29.1 55.5 35.7 28.4" stroke="#999" stroke-width="0.8" fill="none" opacity="0.55"/><ellipse cx="88" cy="32" rx="12" ry="10" fill="#222" opacity="1"/><ellipse cx="88" cy="42" rx="8" ry="8" fill="#f0f0f0" opacity="1"/><polygon points="72,50 104,48 110,72 70,72" fill="#333" opacity="1"/><rect x="14" y="73" width="118" height="44" fill="#f4f4f4" opacity="1"/><rect x="14" y="95" width="118" height="22" fill="#a8a8a8" opacity="1"/><polygon points="68,78 78,78 82,117 62,117" fill="#555" opacity="1"/><path d="M111.3 92.7Q30.5 95.3 89.6 115.0M55.7 103.9Q99.2 106.5 33.1 96.9M63.7 106.9Q60.9 115.4 90.8 106.5M29.1 107.1Q56.5 106.2 51.7 105.4M61.4 109.6Q109.9 116.5 60.4 106.8M120.6 96.7Q84.6 116.1 49.2 105.8M114.8 110.0Q109.1 95.5 43.4 102.2M40.1 97.5Q27.9 102.1 69.4 114.1M107.4 103.8Q48.3 96.6 23.9 99.6M116.3 114.9Q80.7 114.8 113.9 104.6M122.4 109.7Q109.6 105.1 96.7 105.9M62.6 112.7Q69.9 105.0 19.9 97.3M85.8 103.6Q18.2 103.1 113.3 105.5M125.3 98.2Q81.7 109.6 17.9 102.3" stroke="#666" stroke-width="0.8" fill="none" opacity="0.55"/><rect x="14" y="118" width="118" height="68" fill="#f8f8f8" opacity="1"/><polygon points="16,125 30,120 52,182 40,186 14,186" fill="#464646" opacity="1"/><ellipse cx="84" cy="150" rx="27" ry="24" fill="#a0a0a0" opacity="1"/><ellipse cx="80" cy="158" rx="14" ry="14" fill="#f2f2f2" opacity="1"/><ellipse cx="66" cy="142" rx="10" ry="12" fill="#8a8a8a" opacity="1"/><polygon points="52,170 100,166 104,186 48,186" fill="#2e2e2e" opacity="1"/><path d="M14 72.5 H132 M14 117.5 H132" stroke="#333" stroke-width="1.2" fill="none" opacity="1"/><g transform="translate(0 0)"><rect x="13.5" y="19" width="119" height="168" fill="none" stroke="#6d6d9e" stroke-width="2.6"/><rect x="24" y="32" width="98" height="142" fill="none" stroke="rgba(96,96,158,0.52)" stroke-width="1.8"/><path d="M14.5 11.5V18M14.5 188V194.5M131.5 11.5V18M131.5 188V194.5M9 19.5H12.5M133.5 19.5H137M9 186.5H12.5M133.5 186.5H137M68 15.5H78M73 11.5V18M68 190H78M73 188V194.5M8 102.5H12.5M11 97.5V107.5M133.5 102.5H138M135 97.5V107.5" stroke="#6d6d9e" stroke-width="1.6" fill="none"/></g><rect x="0.5" y="0.5" width="145" height="204" fill="none" stroke="#141414" stroke-width="1.2"/></svg>
<svg class="pg" style="left:1645px;top:513px" width="146" height="205" viewBox="0 0 146 205"><rect x="0" y="0" width="146" height="205" fill="#b4b0af"/><rect x="13" y="17.7" width="120" height="168" fill="#fff"/><ellipse cx="42" cy="45" rx="7" ry="7" fill="#5a1a5a" opacity="1"/><ellipse cx="42" cy="48" rx="8" ry="7" fill="#e07aa0" opacity="1"/><polygon points="36,55 50,55 48,62 38,62" fill="#6a1030" opacity="1"/><ellipse cx="59" cy="42" rx="9" ry="7" fill="#1e1e1e" opacity="1"/><ellipse cx="59" cy="48" rx="7" ry="7" fill="#e07aa8" opacity="1"/><polygon points="50,54 68,54 70,62 50,62" fill="#e0609a" opacity="1"/><rect x="54" y="38" width="12" height="4" fill="#d8b020" opacity="1"/><ellipse cx="76" cy="46" rx="8" ry="8" fill="#f0a8c0" opacity="1"/><polygon points="68,54 86,54 84,62 70,62" fill="#d82828" opacity="1"/><ellipse cx="95" cy="46" rx="8" ry="8" fill="#c0a8e8" opacity="1"/><polygon points="88,54 106,54 104,62 88,62" fill="#1e1e1e" opacity="1"/><rect x="88" y="58" width="12" height="3" fill="#d02020" opacity="1"/><rect x="63" y="76" width="56" height="43" fill="#e6424a" opacity="1"/><ellipse cx="95" cy="85" rx="10" ry="8" fill="#c8c8c8" opacity="1"/><polygon points="78,100 112,92 110,122 72,124" fill="#9a9a9a" opacity="1"/><path d="M60 120 L128 75" stroke="#222" stroke-width="2.2" fill="none" opacity="1"/><polygon points="85,95 100,90 103,110 86,112" fill="#222" opacity="1"/><ellipse cx="41" cy="127" rx="8" ry="8" fill="#c4b4ea" opacity="1"/><polygon points="26,137 52,135 56,172 22,176 19,170" fill="#222" opacity="1"/><polygon points="36,155 50,155 50,178 36,178" fill="#e23040" opacity="1"/><path d="M60 140 Q66 150 62 165 Q58 172 66 176" stroke="#e03030" stroke-width="2" fill="none" opacity="1"/><path d="M28 122 L40 140" stroke="#8a5a30" stroke-width="1.2" fill="none" opacity="1"/><g transform="translate(0 -1.3)"><rect x="13.5" y="19" width="119" height="168" fill="none" stroke="#6d6d9e" stroke-width="2.6"/><rect x="24" y="32" width="98" height="142" fill="none" stroke="rgba(96,96,158,0.52)" stroke-width="1.8"/><path d="M14.5 11.5V18M14.5 188V194.5M131.5 11.5V18M131.5 188V194.5M9 19.5H12.5M133.5 19.5H137M9 186.5H12.5M133.5 186.5H137M68 15.5H78M73 11.5V18M68 190H78M73 188V194.5M8 102.5H12.5M11 97.5V107.5M133.5 102.5H138M135 97.5V107.5" stroke="#6d6d9e" stroke-width="1.6" fill="none"/></g><rect x="0.5" y="0.5" width="145" height="204" fill="none" stroke="#141414" stroke-width="1.2"/></svg>
<svg class="pg" style="left:1806px;top:513px" width="146" height="205" viewBox="0 0 146 205"><rect x="0" y="0" width="146" height="205" fill="#fff"/><g transform="translate(0 -1.3)"><rect x="13.5" y="19" width="119" height="168" fill="none" stroke="#a6a6d4" stroke-width="2.6"/><rect x="24" y="32" width="98" height="142" fill="none" stroke="#b9b7cf" stroke-width="1.8"/><path d="M14.5 11.5V18M14.5 188V194.5M131.5 11.5V18M131.5 188V194.5M9 19.5H12.5M133.5 19.5H137M9 186.5H12.5M133.5 186.5H137M68 15.5H78M73 11.5V18M68 190H78M73 188V194.5M8 102.5H12.5M11 97.5V107.5M133.5 102.5H138M135 97.5V107.5" stroke="#8f8fcc" stroke-width="1.6" fill="none"/></g><rect x="0.5" y="0.5" width="145" height="204" fill="none" stroke="#141414" stroke-width="1.2"/></svg>
<div class="lbl t" style="left:216px;width:160px;top:436px"><span style="font-size:16.5px">裏表紙</span></div>
<div class="lbl t" style="left:386px;width:160px;top:436px"><span style="font-size:16.5px">表紙</span></div>
<div class="lbl t" style="left:575px;width:160px;top:436px"><span style="font-size:16.5px">表紙 (裏)</span></div>
<div class="lbl t" style="left:736px;width:160px;top:436px">3</div>
<div class="lbl t" style="left:929px;width:160px;top:436px">4</div>
<div class="lbl t" style="left:1090px;width:160px;top:436px">5</div>
<div class="lbl t" style="left:1283px;width:160px;top:436px">6</div>
<div class="lbl t" style="left:1444px;width:160px;top:436px">7</div>
<div class="lbl t" style="left:1637px;width:160px;top:436px">8</div>
<div class="lbl t" style="left:1798px;width:160px;top:436px">9</div>
<div class="lbl t" style="left:220px;width:160px;top:724px">10</div>
<div class="lbl t" style="left:381px;width:160px;top:724px">11</div>
<div class="lbl t" style="left:575px;width:160px;top:724px">12</div>
<div class="lbl t" style="left:736px;width:160px;top:724px">13</div>
<div class="lbl t" style="left:929px;width:160px;top:724px">14</div>
<div class="lbl t" style="left:1090px;width:160px;top:724px">15</div>
<div class="lbl t" style="left:1283px;width:160px;top:724px">16</div>
<div class="lbl t" style="left:1444px;width:160px;top:724px">17</div>
<div class="lbl t" style="left:1637px;width:160px;top:724px">18</div>
<div class="lbl t" style="left:1798px;width:160px;top:724px"><span style="font-size:16.5px">裏表紙 (裏)</span></div>
</body></html>
